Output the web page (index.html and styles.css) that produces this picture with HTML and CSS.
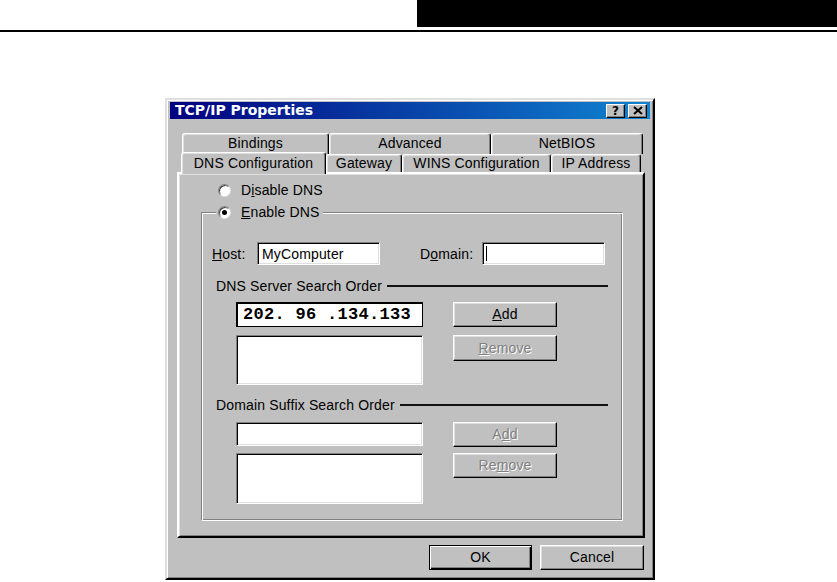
FILE: index.html
```html
<!DOCTYPE html>
<html lang="en">

<head>
    <meta charset="UTF-8">
    <meta name="viewport" content="width=device-width, initial-scale=1.0">
    <title>TCP/IP Properties</title>
    <link rel="stylesheet" href="styles.css">
</head>

<body>

    <div class="page_head">
        <div class="head_bar"></div>
    </div>
    <div class="head_rule"></div>

    <div class="dialog">
        <div class="title_bar">
            <span class="title_text">TCP/IP Properties</span>
            <div class="title_btns">
                <div class="title_btn">?</div>
                <div class="title_btn">
                    <svg width="10" height="9" viewBox="0 0 10 9">
                        <path d="M1 1 L9 8 M9 1 L1 8" stroke="#000" stroke-width="2" fill="none" />
                    </svg>
                </div>
            </div>
        </div>

        <div class="tabs">
            <div class="tab_row back_row">
                <div class="tab tab_bindings">Bindings</div>
                <div class="tab tab_advanced">Advanced</div>
                <div class="tab tab_netbios">NetBIOS</div>
            </div>
            <div class="tab_row front_row">
                <div class="tab tab_dns active">DNS Configuration</div>
                <div class="tab tab_gateway">Gateway</div>
                <div class="tab tab_wins">WINS Configuration</div>
                <div class="tab tab_ip">IP Address</div>
            </div>
        </div>

        <div class="panel">
            <div class="radio_row">
                <span class="radio"></span>
                <span>D<u>i</u>sable DNS</span>
            </div>

            <fieldset class="dns_group">
                <legend>
                    <span class="radio_row">
                        <span class="radio checked"></span>
                        <span><u>E</u>nable DNS</span>
                    </span>
                </legend>

                <div class="host_row">
                    <label class="host_label"><u>H</u>ost:</label>
                    <div class="field host_field">MyComputer</div>
                    <label class="domain_label">D<u>o</u>main:</label>
                    <div class="field host_field"><span class="caret"></span></div>
                </div>

                <div class="section_head">
                    <span>DNS Server Search Order</span>
                    <div class="section_line"></div>
                </div>

                <div class="list_row ip_row">
                    <div class="ip_field">202. 96 .134.133</div>
                    <div class="btn"><u>A</u>dd</div>
                </div>

                <div class="list_row box_row">
                    <div class="field list_box"></div>
                    <div class="btn disabled"><u>R</u>emove</div>
                </div>

                <div class="section_head suffix_head">
                    <span>Domain Suffix Search Order</span>
                    <div class="section_line"></div>
                </div>

                <div class="list_row suffix_row">
                    <div class="field suffix_field"></div>
                    <div class="btn disabled">A<u>d</u>d</div>
                </div>

                <div class="list_row box_row2">
                    <div class="field list_box2"></div>
                    <div class="btn disabled short">Re<u>m</u>ove</div>
                </div>
            </fieldset>
        </div>

        <div class="dialog_btns">
            <div class="btn btn_default">OK</div>
            <div class="btn">Cancel</div>
        </div>
    </div>

</body>

</html>
```

FILE: styles.css
```css
body {
    margin: 0;
    padding: 0;
    font-family: "Liberation Sans", Arial, sans-serif;
    font-size: 14px;
    letter-spacing: 0.15px;
    color: #000;
    background-color: #fff;
}

/* page header */
.page_head {
    display: flex;
    justify-content: flex-end;
    height: 27px;
}

.head_bar {
    width: 420px;
    background-color: #000;
}

.head_rule {
    margin-top: 3px;
    height: 2px;
    background-color: #000;
}

/* window */
.dialog {
    box-sizing: border-box;
    width: 490px;
    height: 482px;
    margin: 66px 0 0 165px;
    padding: 2px 3px 0 3px;
    background-color: #c0c0c0;
    border: 2px solid;
    border-color: #dfdfdf #000 #000 #dfdfdf;
    box-shadow: inset 1px 1px #fff, inset -1px -1px #808080;
}

.title_bar {
    height: 17px;
    display: flex;
    justify-content: space-between;
    align-items: center;
    padding: 0 3px 0 5px;
    background: linear-gradient(90deg, #000080, #1084d0);
}

.title_text {
    font-family: "DejaVu Sans", sans-serif;
    font-weight: bold;
    font-size: 14px;
    letter-spacing: 0;
    color: #fff;
    line-height: 17px;
}

.title_btns {
    display: flex;
    gap: 3px;
}

.title_btn {
    box-sizing: border-box;
    width: 19px;
    height: 14px;
    display: flex;
    justify-content: center;
    align-items: center;
    background-color: #c0c0c0;
    border: 1px solid;
    border-color: #fff #000 #000 #fff;
    box-shadow: inset -1px -1px #808080;
    font-family: "DejaVu Sans", sans-serif;
    font-weight: bold;
    font-size: 12px;
}

/* tabs */
.tabs {
    margin-top: 14px;
    padding-left: 12px;
    height: 39px;
}

.tab_row {
    display: flex;
}

.back_row {
    height: 19px;
}

.front_row {
    height: 20px;
    align-items: flex-end;
    margin-left: -1px;
}

.tab {
    box-sizing: border-box;
    text-align: center;
    background-color: #c0c0c0;
    border: 1px solid;
    border-color: #fff #000 transparent #fff;
    border-bottom: none;
    border-radius: 3px 3px 0 0;
    box-shadow: inset -1px 0 #808080, inset 1px 1px #dfdfdf;
}

.back_row .tab {
    height: 21px;
    line-height: 18px;
}

.front_row .tab {
    height: 18px;
    line-height: 17px;
}

.front_row .tab.active {
    height: 22px;
    margin-bottom: -2px;
    line-height: 20px;
    position: relative;
    z-index: 1;
}

.tab_bindings { width: 147px; }
.tab_advanced { width: 162px; }
.tab_netbios { width: 152px; }
.tab_dns { width: 145px; }
.tab_gateway { width: 76px; }
.tab_wins { width: 149px; }
.tab_ip { width: 90px; }

/* tab page */
.panel {
    box-sizing: border-box;
    height: 366px;
    margin: 0 5px 0 7px;
    padding: 8px 0 0 39px;
    border: 2px solid;
    border-color: #fff #000 #000 #fff;
    box-shadow: inset 1px 1px #dfdfdf, inset -1px -1px #808080;
}

.radio_row {
    display: flex;
    align-items: center;
    gap: 10px;
    height: 16px;
    line-height: 16px;
}

.radio {
    box-sizing: border-box;
    width: 13px;
    height: 13px;
    border-radius: 50%;
    background-color: #fff;
    border: 1px solid;
    border-color: #808080 #dfdfdf #dfdfdf #808080;
    box-shadow: inset 1px 1px #404040;
    display: flex;
    justify-content: center;
    align-items: center;
}

.radio.checked::after {
    content: "";
    width: 5px;
    height: 5px;
    border-radius: 50%;
    background-color: #000;
}

/* Enable DNS group */
.dns_group {
    box-sizing: border-box;
    width: 422px;
    min-width: 0;
    margin: 6px 0 0 -17px;
    padding: 0 14px 16px 10px;
    border: 1px solid;
    border-color: #808080 #fff #fff #808080;
    box-shadow: inset 1px 1px #fff, inset -1px -1px #808080;
}

.dns_group legend {
    margin-left: 4px;
    padding: 0 3px 0 2px;
    background-color: #c0c0c0;
}

.host_row {
    display: flex;
    align-items: center;
    height: 23px;
    margin-top: 22px;
}

.host_label {
    width: 45px;
}

.domain_label {
    width: 62px;
    margin-left: 40px;
}

.field {
    box-sizing: border-box;
    background-color: #fff;
    border: 1px solid;
    border-color: #808080 #fff #fff #808080;
    box-shadow: inset 1px 1px #000, inset -1px -1px #dfdfdf;
}

.host_field {
    width: 123px;
    height: 23px;
    padding-left: 4px;
    line-height: 22px;
    display: flex;
    align-items: center;
}

.caret {
    width: 0;
    height: 15px;
    border-left: 1px solid #000;
    margin-left: -1px;
}

.section_head {
    display: flex;
    align-items: center;
    height: 16px;
    margin: 13px 0 0 4px;
}

.suffix_head {
    margin-top: 12px;
}

.section_line {
    flex: 1;
    height: 2px;
    margin-left: 5px;
    background-color: #111;
}

.list_row {
    display: flex;
    align-items: flex-start;
    gap: 30px;
    margin-left: 24px;
}

.ip_row {
    margin-top: 8px;
}

.box_row {
    margin-top: 8px;
}

.suffix_row {
    margin-top: 9px;
}

.box_row2 {
    margin-top: 6px;
}

.ip_field {
    box-sizing: border-box;
    width: 187px;
    height: 25px;
    padding-left: 6px;
    background-color: #fff;
    border: 1px solid #000;
    box-shadow: inset 1px 1px #000;
    font-family: "Liberation Mono", "Courier New", monospace;
    font-weight: bold;
    font-size: 17px;
    letter-spacing: 0.3px;
    line-height: 24px;
}

.list_box {
    width: 187px;
    height: 50px;
}

.suffix_field {
    width: 187px;
    height: 24px;
}

.list_box2 {
    width: 187px;
    height: 51px;
}

/* buttons */
.btn {
    box-sizing: border-box;
    width: 104px;
    height: 25px;
    text-align: center;
    line-height: 23px;
    background-color: #c0c0c0;
    border: 1px solid;
    border-color: #fff #000 #000 #fff;
    box-shadow: inset -1px -1px #808080, inset 1px 1px #dfdfdf;
}

.box_row .btn {
    height: 26px;
    line-height: 24px;
}

.btn.disabled {
    color: #808080;
    text-shadow: 1px 1px #fff;
}

.dialog_btns {
    display: flex;
    justify-content: flex-end;
    gap: 8px;
    margin: 7px 6px 0 0;
}

.dialog_btns .btn:first-child {
    width: 103px;
}

.btn_default {
    border-color: #000;
    box-shadow: inset 1px 1px #fff, inset -1px -1px #000, inset -2px -2px #808080;
}
```
